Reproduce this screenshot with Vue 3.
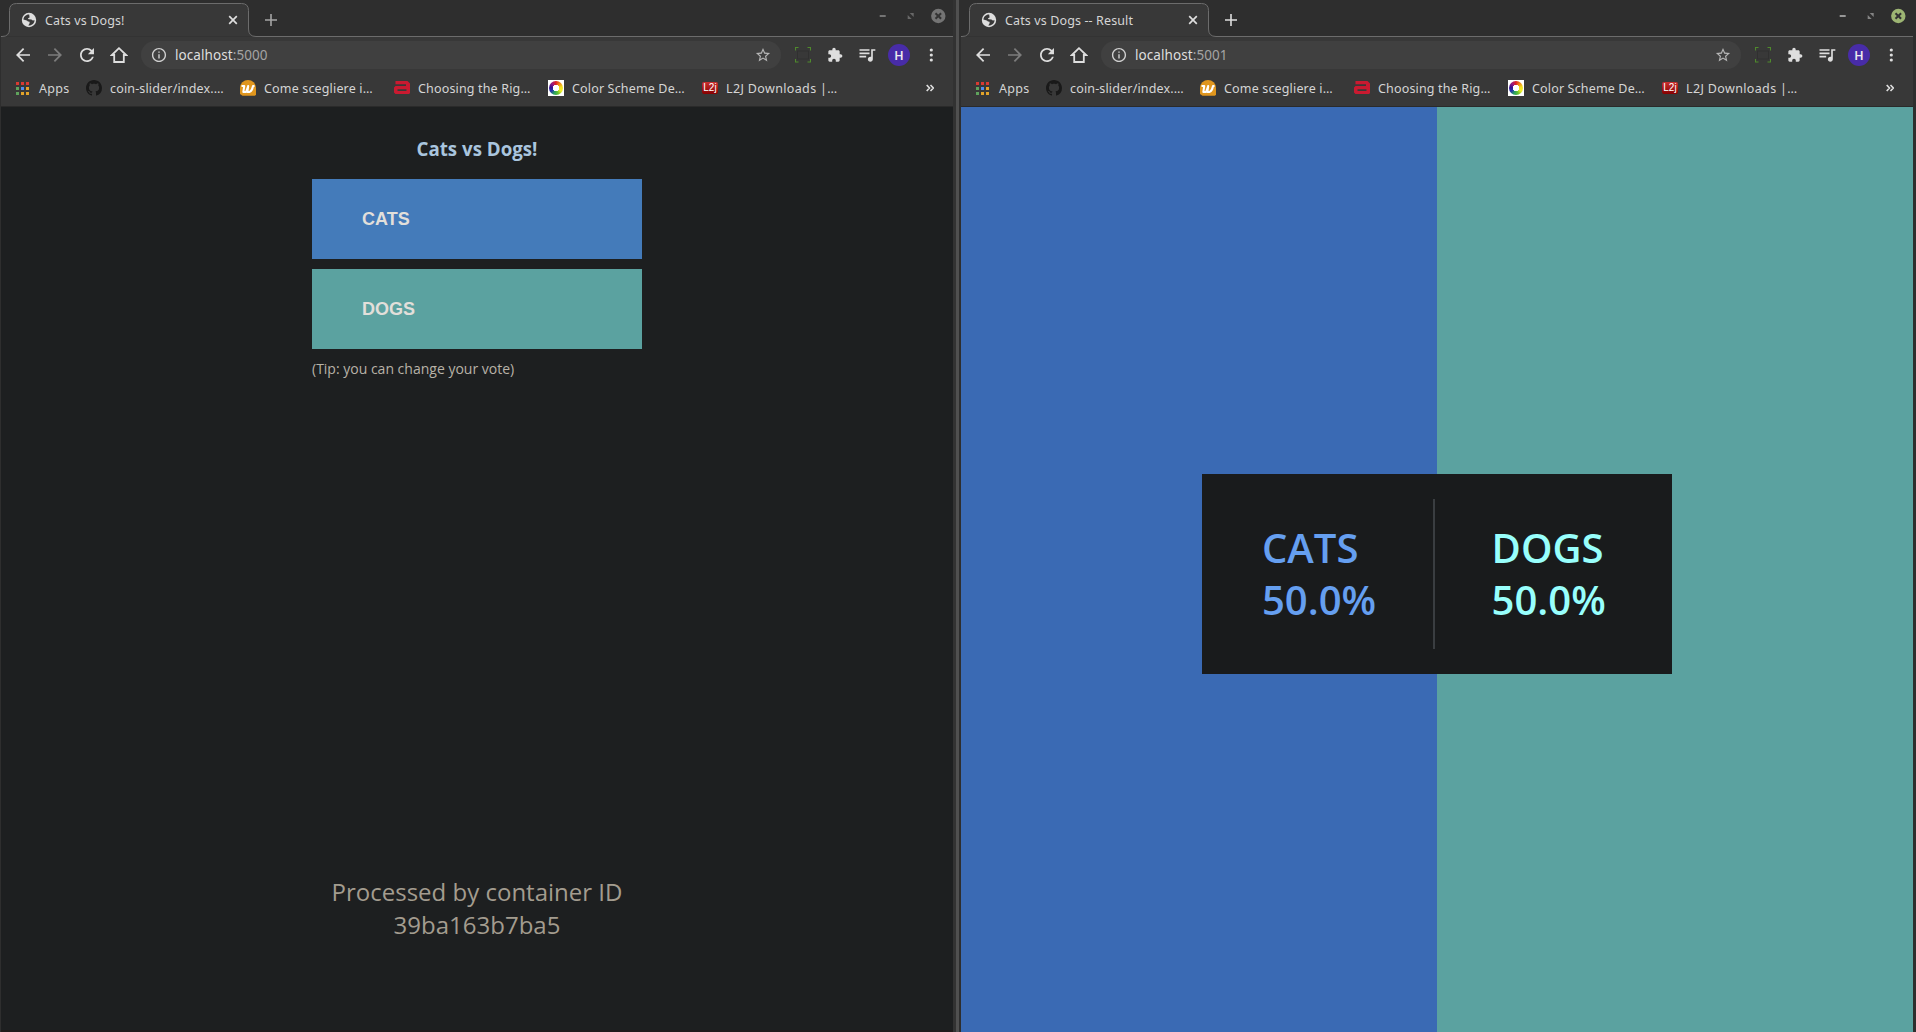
<script setup>
const windows = [
  { id: 'vote', title: 'Cats vs Dogs!', port: ':5000', active: false },
  { id: 'result', title: 'Cats vs Dogs -- Result', port: ':5001', active: true },
]

const bookmarks = [
  { icon: 'github', label: 'coin-slider/index.…' },
  { icon: 'w', label: 'Come scegliere i…' },
  { icon: 'a', label: 'Choosing the Rig…' },
  { icon: 'wheel', label: 'Color Scheme De…' },
  { icon: 'l2j', label: 'L2J Downloads |…' },
]

const appDots = ['#d93a32', '#d93a32', '#d93a32', '#5fa35c', '#4f8df0', '#e2a32a', '#5fa35c', '#e2a32a', '#e2a32a']

const results = [
  { name: 'CATS', share: '50.0%', cls: 'cats' },
  { name: 'DOGS', share: '50.0%', cls: 'dogs' },
]
</script>

<template>
  <div class="desktop">
    <section v-for="w in windows" :key="w.id" class="window" :class="{ active: w.active }">
      <header class="chrome">
        <div class="strip">
          <svg class="tab-shape" width="953" height="37" viewBox="0 0 953 37">
            <path d="M1 36.500H2Q9.500 36.500 9.500 29V10.500Q9.500 3.500 16.500 3.500H241.500Q248.500 3.500 248.500 10.500V29Q248.500 36.500 256 36.500H953" fill="#383838" stroke="#6c6c6c" />
          </svg>
          <div class="tab">
            <svg class="globe" width="16" height="16" viewBox="0 0 16 16">
              <circle cx="8" cy="8" r="7.200" fill="#dedede" />
              <path d="M8.200 2.400C5 2.200 2.600 4.700 2.400 7.600L5 8.200C6.200 8.300 6.300 9.300 7.200 9.500L8.600 9.700V11.200L7.300 13.400C10.800 13.800 13.400 11.200 13.600 8.200L11.800 8.400L10.400 7.400L7.600 7.300L6.900 6.200L8.600 5.400Z" fill="#383838" />
            </svg>
            <span class="tab-title">{{ w.title }}</span>
            <svg class="tab-close" width="10" height="10" viewBox="0 0 10 10"><path d="M1.200 1.200L8.800 8.800M8.800 1.200L1.200 8.800" stroke="#dedede" stroke-width="1.700" /></svg>
          </div>
          <svg class="plus" width="12" height="12" viewBox="0 0 12 12"><path d="M6 0V12M0 6H12" stroke-width="1.600" /></svg>
          <svg class="controls" width="72" height="16" viewBox="0 0 72 16">
            <path d="M2.700 8H8.700" class="ctl" stroke-width="2" />
            <path d="M32.700 5H36.700V9ZM30.700 7V11H34.700Z" class="ctl-fill" />
            <circle cx="61.300" cy="8" r="7.200" class="close-bg" />
            <path d="M58.500 5.200L64.100 10.800M64.100 5.200L58.500 10.800" stroke="#333" stroke-width="2" />
          </svg>
        </div>

        <div class="toolbar">
          <span class="slot"><svg width="22" height="22" viewBox="-.6 -.6 25.200 25.200"><path d="M20 11H7.830l5.590-5.590L12 4l-8 8 8 8 1.410-1.410L7.830 13H20v-2z" /></svg></span>
          <span class="slot dim"><svg width="22" height="22" viewBox="-.6 -.6 25.200 25.200"><path d="M4 11h12.170l-5.590-5.590L12 4l8 8-8 8-1.410-1.410L16.170 13H4v-2z" /></svg></span>
          <span class="slot"><svg width="22" height="22" viewBox="-.6 -.6 25.200 25.200"><path d="M17.650 6.350C16.200 4.900 14.210 4 12 4c-4.420 0-7.990 3.580-7.990 8s3.570 8 7.990 8c3.730 0 6.840-2.550 7.730-6h-2.080c-.82 2.330-3.040 4-5.650 4-3.310 0-6-2.690-6-6s2.690-6 6-6c1.660 0 3.140.69 4.220 1.780L13 11h7V4l-2.350 2.350z" /></svg></span>
          <span class="slot"><svg width="18" height="18" viewBox="0 0 18 18"><path d="M9 2.200L1.900 9H4.200V16H13.800V9H16.100Z" fill="none" stroke="#dedede" stroke-width="1.800" /></svg></span>
          <div class="omnibox">
            <svg class="info" width="18" height="18" viewBox="-.7 -.7 25.400 25.400"><path d="M11 7h2v2h-2zm0 4h2v6h-2zm1-9C6.480 2 2 6.480 2 12s4.480 10 10 10 10-4.480 10-10S17.520 2 12 2zm0 18c-4.410 0-8-3.590-8-8s3.590-8 8-8 8 3.590 8 8-3.590 8-8 8z" /></svg>
            <span class="url">localhost<i>{{ w.port }}</i></span>
            <svg class="star" width="18" height="18" viewBox="-.7 -.7 25.400 25.400"><path d="M22 9.240l-7.190-.62L12 2 9.190 8.630 2 9.240l5.460 4.730L5.820 21 12 17.270 18.180 21l-1.630-7.030L22 9.240zM12 15.400l-3.760 2.270 1-4.280-3.320-2.880 4.380-.38L12 6.100l1.710 4.040 4.380.38-3.320 2.880 1 4.280L12 15.400z" /></svg>
          </div>
          <span class="slot first"><svg width="16" height="16" viewBox="0 0 16 16"><path d="M.5 3.500V.5H3.500M12.500 .5H15.500V3.500M15.500 12V15H12.500M3.500 15H.5V12" fill="none" stroke="#4f8a2c" stroke-width="1.100" /><rect x="2.500" y="4" width="11" height="8" fill="none" stroke="#303030" /></svg></span>
          <span class="slot"><svg width="16" height="16" viewBox="0 0 24 24"><path d="M20.500 11H19V7c0-1.100-.9-2-2-2h-4V3.500C13 2.120 11.880 1 10.500 1S8 2.120 8 3.500V5H4c-1.100 0-1.990.9-1.990 2v3.800H3.500c1.490 0 2.700 1.210 2.700 2.700s-1.210 2.700-2.700 2.700H2V20c0 1.100.9 2 2 2h3.800v-1.500c0-1.490 1.210-2.700 2.700-2.700 1.490 0 2.700 1.210 2.700 2.700V22H17c1.100 0 2-.9 2-2v-4h1.500c1.380 0 2.500-1.120 2.500-2.500S21.880 11 20.500 11z" /></svg></span>
          <span class="slot"><svg width="20" height="20" viewBox="0 0 24 24"><path d="M15 5H3v2h12V5zm0 4H3v2h12V9zM3 15h8v-2H3v2zM17 5v9.180c-.31-.11-.65-.18-1-.18-1.660 0-3 1.340-3 3s1.340 3 3 3 3-1.340 3-3V7h3V5h-5z" /></svg></span>
          <span class="slot"><b class="avatar">H</b></span>
          <span class="slot"><svg width="4" height="14" viewBox="0 0 4 14"><circle cx="2.300" cy="2" r="1.600" /><circle cx="2.300" cy="7" r="1.600" /><circle cx="2.300" cy="12" r="1.600" /></svg></span>
        </div>

        <nav class="bookmarks">
          <div class="apps">
            <span class="grid"><i v-for="(c, n) in appDots" :key="n" :style="{ background: c }"></i></span>
            <span>Apps</span>
          </div>
          <div v-for="b in bookmarks" :key="b.icon" class="bookmark">
            <svg v-if="b.icon === 'github'" width="16" height="16" viewBox="0 0 16 16"><path fill="#191919" d="M8 0C3.580 0 0 3.580 0 8c0 3.540 2.290 6.530 5.470 7.590.4.070.55-.17.55-.38 0-.19-.01-.82-.01-1.490-2.010.37-2.530-.49-2.690-.94-.09-.23-.48-.94-.82-1.130-.28-.15-.68-.52-.01-.53.63-.01 1.080.58 1.230.82.72 1.210 1.870.87 2.330.66.070-.52.28-.87.51-1.070-1.780-.2-3.640-.89-3.640-3.950 0-.87.31-1.590.82-2.150-.08-.2-.36-1.020.08-2.120 0 0 .67-.21 2.200.82.64-.18 1.320-.27 2-.27s1.360.09 2 .27c1.530-1.040 2.200-.82 2.200-.82.44 1.100.16 1.920.08 2.120.51.56.82 1.270.82 2.150 0 3.070-1.870 3.750-3.650 3.950.29.25.54.73.54 1.480 0 1.070-.01 1.930-.01 2.200 0 .21.15.46.55.38A8.010 8.010 0 0 0 16 8c0-4.420-3.580-8-8-8z" /></svg>
            <svg v-else-if="b.icon === 'w'" width="16" height="16" viewBox="0 0 16 16"><path d="M8 0A8 8 0 0 1 16 8V14.500L15 15.800H2.500L0 14V8A8 8 0 0 1 8 0Z" fill="#e0961e" /><path d="M1.500 6H4.300L3.300 12H6L8.200 6L7.400 12H9.600Q12.300 10.500 13 6H14.500" fill="none" stroke="#fff" stroke-width="2" stroke-linejoin="round" /></svg>
            <svg v-else-if="b.icon === 'a'" width="16" height="16" viewBox="0 0 16 16"><path d="M1.500 1H13.500L16 3.500V13L15 14H1.500L0 12.500V7.500L1.500 6H12V4.200H1.500ZM3.500 9.300V11H12.500V9.300Z" fill="#c91a30" fill-rule="evenodd" /></svg>
            <span v-else-if="b.icon === 'wheel'" class="wheel"><i></i></span>
            <span v-else class="l2j">L2j</span>
            <span :class="['label', b.icon]">{{ b.label }}</span>
          </div>
          <svg class="more" width="8" height="8" viewBox="0 0 8 8"><path d="M.7 1L3.500 4L.7 7M4.500 1L7.300 4L4.500 7" fill="none" stroke="#dedede" stroke-width="1.600" /></svg>
        </nav>
      </header>

      <main v-if="w.id === 'vote'" class="vote">
        <div class="ballot">
          <h3>Cats vs Dogs!</h3>
          <button class="choice cats">CATS</button>
          <button class="choice dogs">DOGS</button>
          <p class="tip">(Tip: you can change your vote)</p>
        </div>
        <p class="container-id">Processed by container ID<br />39ba163b7ba5</p>
      </main>

      <main v-else class="result">
        <div class="card">
          <template v-for="(r, n) in results" :key="r.name">
            <div v-if="n" class="rule"></div>
            <div class="tally" :class="r.cls">{{ r.name }}<br />{{ r.share }}</div>
          </template>
        </div>
      </main>
    </section>
  </div>
</template>

<style>
html, body { margin: 0; background: #2e2e2e; overflow: hidden; }
</style>

<style scoped>
.desktop {
  display: flex;
  width: 1916px;
  height: 1032px;
  overflow: hidden;
  background: #2e2e2e;
  font-family: "Noto Sans", sans-serif;
}
.window {
  box-sizing: border-box;
  width: 960px;
  flex: none;
  display: flex;
  flex-direction: column;
  border-right: 1px solid #2e2e2e;
  background: linear-gradient(90deg, #2e2e2e 953px, #323232 953px, #323232 956px, #505050 956px);
}
.window.active { background: #2e2e2e; }
.chrome { width: 953px; height: 107px; flex: none; color: #d5d5d5; font-size: 12.500px; }
.strip { position: relative; height: 37px; display: flex; align-items: flex-start; background: #2e2e2e; }
.tab-shape { position: absolute; left: 0; top: 0; }
.tab { position: relative; box-sizing: border-box; width: 240px; margin-left: 9px; height: 36px; padding: 4px 11px 0 12px; display: flex; align-items: center; }
.tab-title { margin-left: 8px; flex: 1; white-space: nowrap; letter-spacing: 0.12px; }
.plus { position: relative; margin: 14px 0 0 16px; stroke: #a5a5a5; }
.active .plus { stroke: #dedede; }
.controls { position: relative; margin: 8px 4px 0 auto; }
.ctl { stroke: #747474; }
.ctl-fill { fill: #686868; }
.close-bg { fill: #747474; }
.active .ctl { stroke: #979797; }
.active .ctl-fill { fill: #858585; }
.active .close-bg { fill: #9db573; }
.toolbar { box-sizing: border-box; height: 36px; margin-left: 1px; padding-left: 6px; display: flex; align-items: center; background: #383838; }
.slot { width: 32px; height: 32px; flex: none; display: flex; align-items: center; justify-content: center; fill: #dedede; }
.slot.dim { fill: #7c7c7c; }
.slot.first { margin-left: 6px; }
.omnibox { box-sizing: border-box; width: 640px; height: 28px; margin-left: 6px; padding: 0 9px; border-radius: 14px; display: flex; align-items: center; background: #404040; }
.info { fill: #cfcfcf; }
.url { margin-left: 7px; flex: 1; font-size: 13.500px; color: #dedede; letter-spacing: 0.08px; }
.url i { font-style: normal; color: #a4a4a4; }
.star { fill: #b5b5b5; }
.avatar { width: 22px; height: 22px; border-radius: 50%; display: flex; align-items: center; justify-content: center; background: #482ca8; color: #eee; font: 500 12.500px "Roboto", sans-serif; }
.bookmarks { box-sizing: border-box; height: 34px; margin-left: 1px; padding: 0 19px 3px 15px; display: flex; align-items: center; background: #383838; border-bottom: 1px solid #2a2a2a; white-space: nowrap; }
.apps { width: 70px; display: flex; align-items: center; gap: 10px; letter-spacing: 0.3px; }
.grid { width: 13px; display: grid; grid-template-columns: repeat(3, 3px); gap: 2px; }
.grid i { height: 3px; }
.bookmark { width: 154px; display: flex; align-items: center; gap: 8px; }
.bookmark > :first-child { flex: none; }
.label { letter-spacing: 0.16px; }
.label.l2j-label, .bookmark:nth-child(6) .label { letter-spacing: 0.36px; }
.wheel:first-child { width: 16px; height: 16px; display: flex; align-items: center; justify-content: center; background: #fff; }
.wheel i { width: 14px; height: 14px; border-radius: 50%; background: radial-gradient(circle, #fff 3px, transparent 3.500px), conic-gradient(#e02020, #f08a18, #f0e020, #f2ef28, #5fc030, #28a060, #2430b0, #3a1090, #a01880, #e02020); }
.l2j:first-child { width: 16px; height: 12px; border-radius: 2px; background: linear-gradient(#c83030, #860000); color: #fff; font: 10px/12px "Liberation Sans", sans-serif; text-align: center; }
.more { margin-left: auto; }

.vote { box-sizing: border-box; width: 952px; flex: 1; margin-left: 1px; display: flex; flex-direction: column; align-items: center; justify-content: space-between; background: #1d1f20; border-bottom: 2px solid #201a1a; font-family: "Open Sans", sans-serif; }
.ballot { width: 330px; padding-top: 28px; }
h3 { margin: 0 0 16px; height: 28px; font-size: 18.720px; line-height: 27px; font-weight: 700; text-align: center; color: #a9c5de; }
.choice { display: block; width: 330px; height: 80px; margin: 0 0 10px; padding: 0 0 0 50px; border: 0; text-align: left; color: #e2dfda; font: bold 18px "Liberation Sans", sans-serif; }
.choice.cats { background: #447bba; }
.choice.dogs { background: #5ba2a0; }
.tip { margin: 0; font-size: 14px; line-height: 20px; color: #b8b2a7; }
.container-id { margin: 0 0 89px; font-size: 24px; line-height: 33px; text-align: center; color: #a39c8f; }

.result { width: 952px; flex: 1; margin-left: 1px; display: flex; align-items: center; justify-content: center; background: linear-gradient(90deg, #3a6ab4 50%, #5ba2a0 50%); font-family: "Open Sans", sans-serif; }
.card { box-sizing: border-box; width: 470px; height: 200px; margin-top: 9px; padding-left: 60px; display: flex; align-items: center; background: #191b1c; }
.tally { width: 171px; font-size: 40px; line-height: 52px; font-weight: 600; }
.tally.cats { color: #659ff0; }
.tally.dogs { color: #98fffc; }
.rule { width: 2px; height: 150px; margin-right: 56.600px; background: #3a3e41; }
</style>
